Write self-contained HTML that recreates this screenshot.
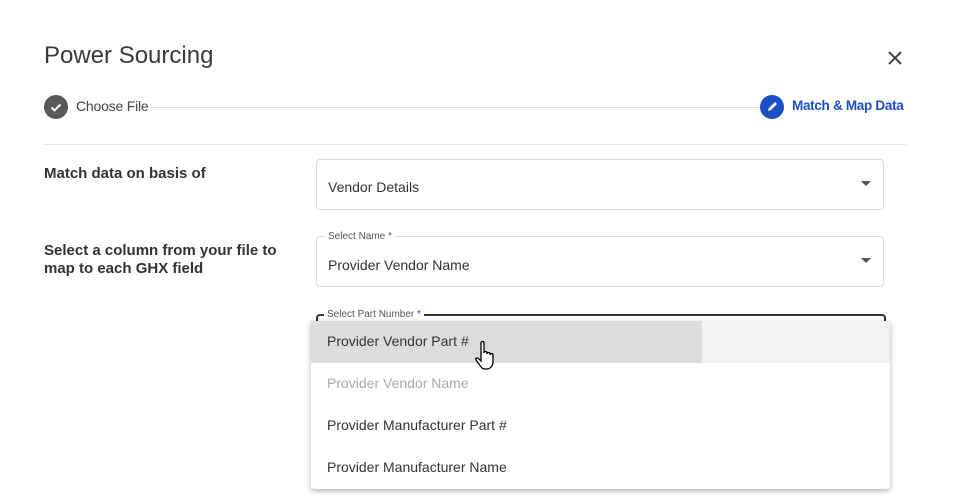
<!DOCTYPE html>
<html><head><style>
body{margin:0;width:956px;height:502px;background:#fff;font-family:"Liberation Sans",sans-serif;position:relative;overflow:hidden}
.a{position:absolute}
.box{position:absolute;left:316px;width:566px;height:49px;border:1px solid #dcdcdc;border-radius:4px}
.lbl{position:absolute;font-size:10px;color:#555;background:#fff;padding:0 3px}
.val{position:absolute;left:11px;font-size:14px;color:#333}
.arr{position:absolute;right:12px;top:21px;width:0;height:0;border-left:5px solid transparent;border-right:5px solid transparent;border-top:5px solid #555}
.item{position:absolute;left:0;width:579px;height:42px;line-height:40px;padding-left:16px;box-sizing:border-box;font-size:14px;color:#333}
</style></head><body>
<div class="a" style="left:44px;top:42px;font-size:24px;color:#3a3a3a">Power Sourcing</div>
<svg class="a" style="left:886px;top:49px" width="18" height="18"><path d="M3 3L15 15M15 3L3 15" stroke="#444" stroke-width="2"/></svg>
<div class="a" style="left:44px;top:95px;width:24px;height:24px;border-radius:50%;background:#5a5a5a"></div>
<svg class="a" style="left:44px;top:95px" width="24" height="24"><path d="M7.5 12.5l3 3 6-6" stroke="#fff" stroke-width="2" fill="none"/></svg>
<div class="a" style="left:76px;top:98px;font-size:14px;color:#444;letter-spacing:-0.2px">Choose File</div>
<div class="a" style="left:150px;top:107px;width:610px;height:1px;background:#ddd"></div>
<div class="a" style="left:760px;top:95px;width:24px;height:24px;border-radius:50%;background:#1d4fc4"></div>
<svg class="a" style="left:760px;top:95px" width="24" height="24"><path d="M8 16l1-3 6-6 2 2-6 6z" fill="#fff"/></svg>
<div class="a" style="left:792px;top:98px;font-size:13.5px;color:#1d4fc4;font-weight:bold;letter-spacing:-0.3px">Match &amp; Map Data</div>
<div class="a" style="left:44px;top:144px;width:862px;height:1px;background:#e6e6e6"></div>
<div class="a" style="left:44px;top:165px;font-size:15px;font-weight:bold;color:#333">Match data on basis of</div>
<div class="a" style="left:44px;top:242px;font-size:15px;font-weight:bold;color:#333;line-height:18px">Select a column from your file to<br>map to each GHX field</div>
<div class="box" style="top:159px"><div class="val" style="top:19px">Vendor Details</div><div class="arr"></div></div>
<div class="box" style="top:236px"><div class="lbl" style="left:8px;top:-6px">Select Name *</div><div class="val" style="top:20px">Provider Vendor Name</div><div class="arr"></div></div>
<div class="box" style="top:314px;border:2px solid #333;height:60px"><div class="lbl" style="left:6px;top:-7px">Select Part Number <span style="color:#1d4fc4">*</span></div></div>
<div class="a" style="left:311px;top:321px;width:579px;height:168px;background:#fff;box-shadow:0 2px 6px rgba(0,0,0,.3);border-radius:3px">
<div class="item" style="top:0;background:#f2f2f2"><div class="a" style="left:0;top:0;width:391px;height:42px;background:#dcdcdc"></div><span style="position:relative">Provider Vendor Part #</span></div>
<div class="item" style="top:42px;color:#aaa">Provider Vendor Name</div>
<div class="item" style="top:84px">Provider Manufacturer Part #</div>
<div class="item" style="top:126px">Provider Manufacturer Name</div>
</div>
<svg class="a" style="left:474px;top:340px" width="26" height="32"><path d="M7 3c0-2 3-2 3 0v10c0-2 3-2 3 0v1c0-2 3-2 3 0v1c0-2 3-2 3 0v7c0 4-3 7-6 7h-2c-3 0-4-2-6-5l-3-4c-1-2 1-3 3-1l2 2z" fill="#fff" stroke="#000" stroke-width="1.3"/></svg>
</body></html>
